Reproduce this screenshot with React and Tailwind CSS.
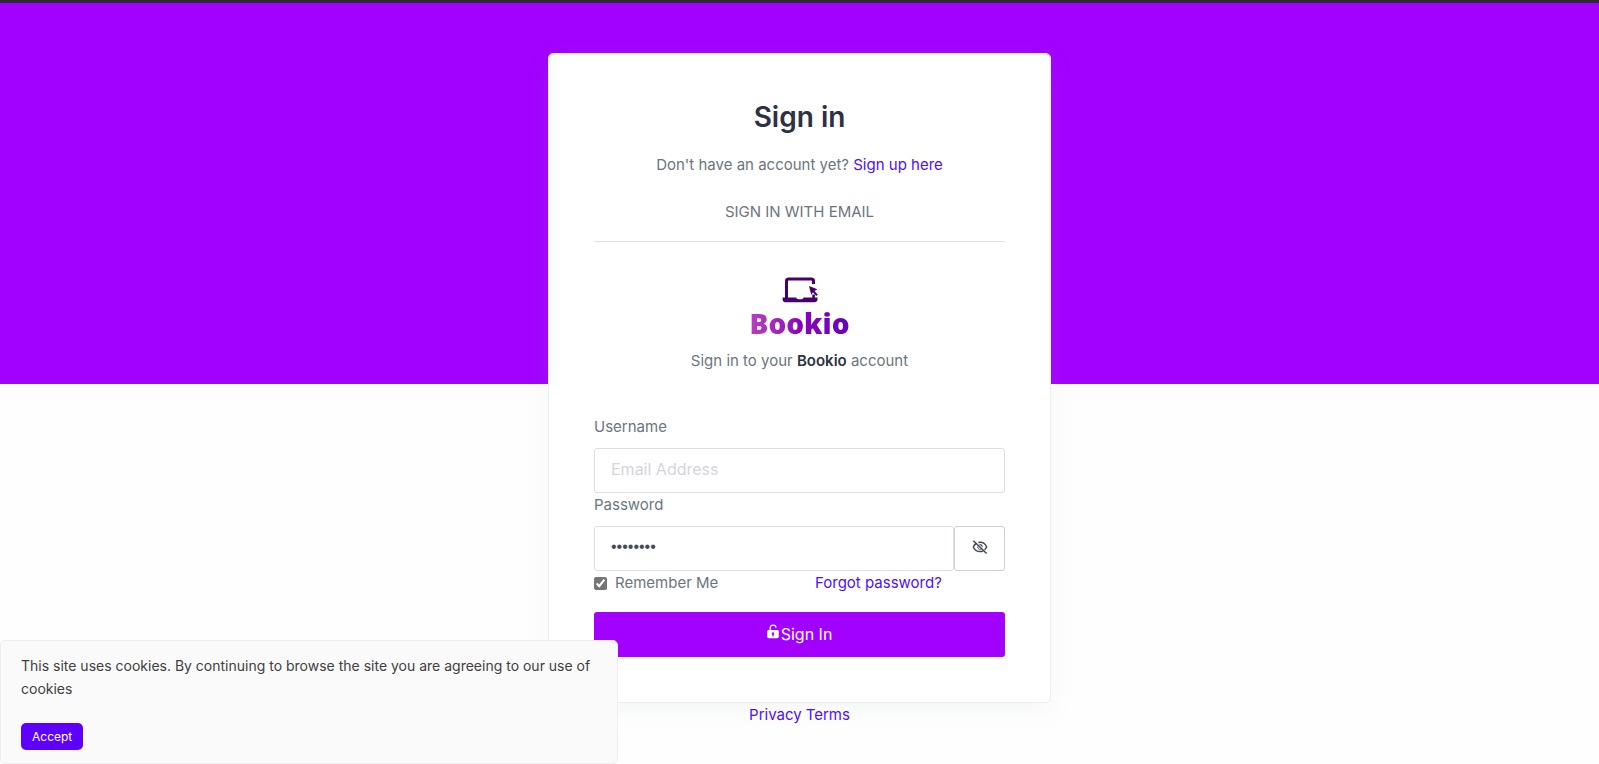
function LaptopLogo() {
  return (
    <svg viewBox="0 0 36 26" className="h-[26px] w-9" aria-hidden="true">
      <path d="M4.500 21V4.200C4.500 2.900 5.300 2 6.600 2h22.800c1.300 0 2.100.9 2.100 2.200V7" fill="none" stroke="#45006c" strokeWidth="3" />
      <path d="M31.600 17.500v4" stroke="#45006c" strokeWidth="2.600" />
      <path d="M.6 20.600h13.600c.5 1.500 1.600 1.700 3.600 1.700s3.300-.2 3.800-1.700h13.900v1.600c0 2-1.200 3-3.200 3H3.600c-2 0-3-1-3-3z" fill="#45006c" />
      <path d="M27 9l8.400 3.300-2.900 1.600 3.300 3.900-1.600 1.300-3.300-3.900-1.600 2.700z" fill="#45006c" />
    </svg>
  );
}

function EyeOffIcon() {
  return (
    <svg viewBox="0 0 16 16" className="size-4" fill="none" stroke="#474b58" aria-hidden="true">
      <path d="M4.300 4.500C2.900 5.300 1.900 6.500 1.300 8c1.200 2.900 3.700 4.600 6.700 4.600 1.100 0 2.100-.2 3-.6M6.300 3.500C10.200 2.800 13.300 4.700 14.700 8c-.5 1.100-1.200 2-2.100 2.800" strokeWidth="1.500" />
      <path d="M1.400 1.700l13.200 12.800" strokeWidth="1.600" />
      <path d="M7.200 5.200c2-.5 3.900 1.100 3.500 3.300z" fill="#474b58" stroke="none" />
      <path d="M5.700 7.500c-.2 1.900 1 3.200 2.900 3" strokeWidth="1" />
    </svg>
  );
}

function UnlockIcon() {
  return (
    <svg viewBox="0 0 12 15" className="mb-1 h-[15px] w-3" aria-hidden="true">
      <path d="M3.200 7V4.200C3.200 2.300 4.400 1.100 6.100 1.100S9 2.200 9 3.800" fill="none" stroke="#fff" strokeWidth="1.300" />
      <path fillRule="evenodd" d="M1.800 6h8.400c1 0 1.600.6 1.600 1.600v5c0 1-.6 1.600-1.600 1.600H1.800c-1 0-1.600-.6-1.600-1.600v-5C.2 6.600.8 6 1.800 6zM6 8.300a1.300 1.300 0 0 0-.7 2.400v1.700h1.400v-1.700A1.300 1.300 0 0 0 6 8.300z" fill="#fff" />
    </svg>
  );
}

const inputClass =
  "h-[45px] w-full min-w-0 rounded-[3px] border border-[#dcdee3] bg-white px-4 pb-1 text-base text-[#474b58] outline-none placeholder:text-[#d3d5dc]";

export default function App() {
  return (
    <div className="min-h-screen border-t-[3px] border-[#2d2d2d] bg-[linear-gradient(#a200ff_381px,#fefefe_381px)] px-4 font-['Inter',sans-serif] text-[15px] leading-6 text-[#6c757d]">
      <main className="mx-auto w-full max-w-[503px] pt-[50px]">
        <section className="rounded-[5px] border border-[#eeeeef] bg-white bg-clip-padding px-[45px] py-[45px] shadow-[0_6px_24px_rgba(140,152,164,0.09)]">
          <header className="text-center">
            <h1 className="text-[28px] leading-9 font-semibold text-[#2d3142]">Sign in</h1>
            <p className="mt-[18px]">
              Don't have an account yet?{" "}
              <a href="#signup" className="text-[#4c0fff]">Sign up here</a>
            </p>
            <p className="mt-[23px]">SIGN IN WITH EMAIL</p>
          </header>
          <hr className="mt-[17px] border-[#e1e2e5]" />
          <div className="mt-[35px] flex flex-col items-center">
            <LaptopLogo />
            <span className="mt-0.5 bg-linear-to-r from-[#b83dc0] via-[#8e00b8] to-[#6400bd] bg-clip-text font-['Open_Sans',sans-serif] text-[28px] leading-9 font-extrabold text-transparent">
              Bookio
            </span>
            <p className="mt-2">
              Sign in to your <strong className="font-semibold text-[#2d3142]">Bookio</strong> account
            </p>
          </div>
          <form className="mt-[42px]" onSubmit={(e) => e.preventDefault()}>
            <label htmlFor="username" className="mb-[9px] block">Username</label>
            <input id="username" type="text" placeholder="Email Address" className={inputClass} />
            <label htmlFor="password" className="mb-[9px] block">Password</label>
            <div className="flex">
              <input id="password" type="password" defaultValue="password" className={`${inputClass} font-['Liberation_Sans',sans-serif]`} />
              <button type="button" aria-label="Show password" className="flex h-[45px] w-[51px] shrink-0 items-center justify-center rounded-[3px] border border-[#cdd0d8] bg-white pb-1">
                <EyeOffIcon />
              </button>
            </div>
            <div className="grid grid-cols-[221px_1fr]">
              <div className="flex items-center gap-2">
                <input id="remember" type="checkbox" defaultChecked className="size-[13px] accent-[#757575]" />
                <label htmlFor="remember">Remember Me</label>
              </div>
              <a href="#forgot" className="text-[#4c0fff]">Forgot password?</a>
            </div>
            <button type="submit" className="mt-[17px] flex h-[45px] w-full items-center justify-center gap-0.5 rounded-[3px] bg-[#a200ff] pb-0.5 text-base text-white">
              <UnlockIcon />
              Sign In
            </button>
          </form>
        </section>
        <footer className="flex justify-center gap-1 text-[#4c0fff]">
          <a href="#privacy">Privacy</a>
          <a href="#terms">Terms</a>
        </footer>
      </main>
      <aside className="fixed bottom-0 left-0 w-full max-w-[618px] rounded-[5px] border border-[#eeeeee] bg-[#fafafa] px-5 pt-[13px] pb-[13px] text-sm text-[#404040]">
        <p className="leading-[23px]">This site uses cookies. By continuing to browse the site you are agreeing to our use of cookies</p>
        <button type="button" className="mt-[23px] flex h-[27px] items-center rounded-[5px] bg-[#5e00ff] px-[11px] text-xs text-white">Accept</button>
      </aside>
    </div>
  );
}
